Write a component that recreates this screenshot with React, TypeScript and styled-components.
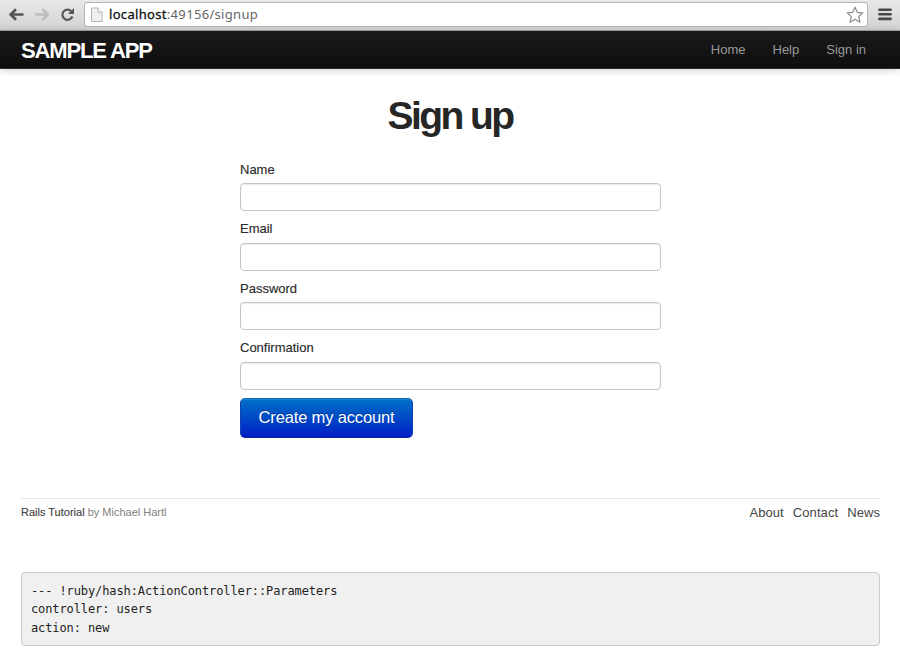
import React from "react";
import styled, { createGlobalStyle } from "styled-components";

const Global = createGlobalStyle`
  * { box-sizing: border-box; }
  html, body { margin: 0; padding: 0; background: #fff; }
  body { font-family: "Liberation Sans", Arial, sans-serif; font-size: 13px; color: #333; }
`;

const Page = styled.div`
  width: 900px;
  height: 650px;
  overflow: hidden;
  display: flex;
  flex-direction: column;
  background: #fff;
`;

const Toolbar = styled.div`
  height: 31px;
  flex: none;
  display: flex;
  align-items: flex-start;
  padding: 2px 8px 0;
  background: linear-gradient(#e9e9e9, #d2d2d2);
  border-bottom: 1px solid #a4a4a4;
`;

const NavIcons = styled.div`
  display: flex;
  width: 76px;
  height: 25px;
`;

const AddressBar = styled.div`
  width: 784px;
  height: 25px;
  display: flex;
  align-items: center;
  padding: 0 3px 0 6px;
  background: #fff;
  border: 1px solid #b5b5b5;
  border-radius: 3px;
`;

const Url = styled.div`
  flex: 1;
  margin: -2px 0 0 6px;
  font: 13px/20px "Noto Sans", sans-serif;
  letter-spacing: 0.32px;
  color: #666;
`;

const Host = styled.span`
  color: #111;
  -webkit-text-stroke: 0.3px #111;
`;

const MenuIcon = styled.svg`
  margin: 6px 0 0 10px;
`;

const Navbar = styled.header`
  height: 38px;
  flex: none;
  display: flex;
  justify-content: space-between;
  padding: 0 34px 0 21px;
  background: linear-gradient(#1a1a1a, #0e0e0e);
  border-bottom: 1px solid #2a2a2a;
  box-shadow: 0 1px 8px rgba(0, 0, 0, 0.2);
`;

const Logo = styled.div`
  font-size: 22px;
  line-height: 40px;
  font-weight: bold;
  letter-spacing: -1.15px;
  color: #fff;
`;

const Links = styled.nav`
  display: flex;
  gap: 27px;
  font-size: 13px;
  line-height: 38px;
  color: #999;
`;

const Title = styled.h1`
  margin: 27px 0 0;
  height: 41px;
  font-size: 39px;
  line-height: 40px;
  letter-spacing: -2.6px;
  text-align: center;
  color: #262626;
`;

const Form = styled.form`
  width: 421px;
  margin: 23px 0 0 240px;
`;

const Label = styled.label`
  display: block;
  height: 23.4px;
  font-size: 13px;
  line-height: 20px;
  color: #2b2b2b;
  -webkit-text-stroke: 0.15px #2b2b2b;
`;

const Input = styled.input`
  display: block;
  width: 100%;
  height: 28px;
  margin: 0 0 8px;
  padding: 3px 6px;
  border: 1px solid #c5c5c5;
  border-radius: 4px;
  background: #fff;
  box-shadow: inset 0 1px 1px rgba(0, 0, 0, 0.08);
`;

const Submit = styled.button`
  display: block;
  width: 173px;
  height: 40px;
  margin: 0;
  padding: 0;
  border: 1px solid;
  border-color: #1267b4 #1243b0 #0a25a0;
  border-radius: 5px;
  background: linear-gradient(#0070c8, #001fc4);
  box-shadow: inset 0 1px 0 rgba(255, 255, 255, 0.1);
  color: #fff;
  font: 16.5px "Liberation Sans", Arial, sans-serif;
  letter-spacing: -0.15px;
  text-shadow: 0 -1px 0 rgba(0, 0, 0, 0.25);
`;

const Footer = styled.footer`
  display: flex;
  justify-content: space-between;
  margin: 60px 20px 0 21px;
  padding-top: 4px;
  border-top: 1px solid #e6e6e6;
  line-height: 20px;
`;

const Credit = styled.div`
  margin-top: -1px;
  font-size: 11px;
  color: #808080;
`;

const Strong = styled.span`
  color: #444;
  -webkit-text-stroke: 0.15px #444;
`;

const FooterLinks = styled.nav`
  display: flex;
  gap: 9px;
  font-size: 13px;
  letter-spacing: 0.08px;
  color: #444;
`;

const Debug = styled.pre`
  flex: none;
  height: 74px;
  margin: 49px 20px 0 21px;
  padding: 9px;
  border: 1px solid #cacaca;
  border-radius: 4px;
  background: #f0f0f0;
  color: #222;
  font: 12px/18.5px "DejaVu Sans Mono", monospace;
  letter-spacing: -0.1px;
`;

const fields = ["Name", "Email", "Password", "Confirmation"];

export default function App() {
  return (
    <Page>
      <Global />
      <Toolbar>
        <NavIcons>
          <svg width="76" height="25" viewBox="8 2 76 25" fill="none">
            <path d="M23.5 14.5H11.5M16 9.3L10.7 14.5L16 19.7" stroke="#555" strokeWidth="2.7" />
            <path d="M35 14.5H47M42.5 9.3L47.8 14.5L42.5 19.7" stroke="#bdbdbd" strokeWidth="2.7" />
            <path d="M71.2 11.2A5.1 5.1 0 1 0 72.3 16.5" stroke="#555" strokeWidth="2.2" />
            <path d="M74 8V14H68Z" fill="#555" />
          </svg>
        </NavIcons>
        <AddressBar>
          <svg width="12" height="16" viewBox="0 0 12 16" fill="#f0f0f0" stroke="#b4b4b4">
            <path d="M.5 1H7L11.2 5.2V14.5H.5Z" />
            <path d="M7 1V5.2H11.2" fill="#fff" />
          </svg>
          <Url>
            <Host>localhost</Host>:49156/signup
          </Url>
          <svg width="18" height="18" viewBox="0 0 18 18" fill="#fff" stroke="#8d8d8d" strokeWidth="1.2" strokeLinejoin="round">
            <path d="M9 1.2L11.3 6.3L16.8 6.8L12.7 10.6L14 16.2L9 13.2L4 16.2L5.3 10.6L1.2 6.8L6.7 6.3Z" />
          </svg>
        </AddressBar>
        <MenuIcon width="14" height="13" viewBox="0 0 14 13" stroke="#484848" strokeWidth="2.6" strokeLinecap="round">
          <path d="M1.4 1.7H12.6M1.4 6.3H12.6M1.4 10.9H12.6" />
        </MenuIcon>
      </Toolbar>
      <Navbar>
        <Logo>SAMPLE APP</Logo>
        <Links>
          <span>Home</span>
          <span>Help</span>
          <span>Sign in</span>
        </Links>
      </Navbar>
      <Title>Sign up</Title>
      <Form onSubmit={(e) => e.preventDefault()}>
        {fields.map((f) => (
          <React.Fragment key={f}>
            <Label htmlFor={f}>{f}</Label>
            <Input id={f} />
          </React.Fragment>
        ))}
        <Submit>Create my account</Submit>
      </Form>
      <Footer>
        <Credit>
          <Strong>Rails Tutorial</Strong> by Michael Hartl
        </Credit>
        <FooterLinks>
          <span>About</span>
          <span>Contact</span>
          <span>News</span>
        </FooterLinks>
      </Footer>
      <Debug>{"--- !ruby/hash:ActionController::Parameters\ncontroller: users\naction: new"}</Debug>
    </Page>
  );
}
